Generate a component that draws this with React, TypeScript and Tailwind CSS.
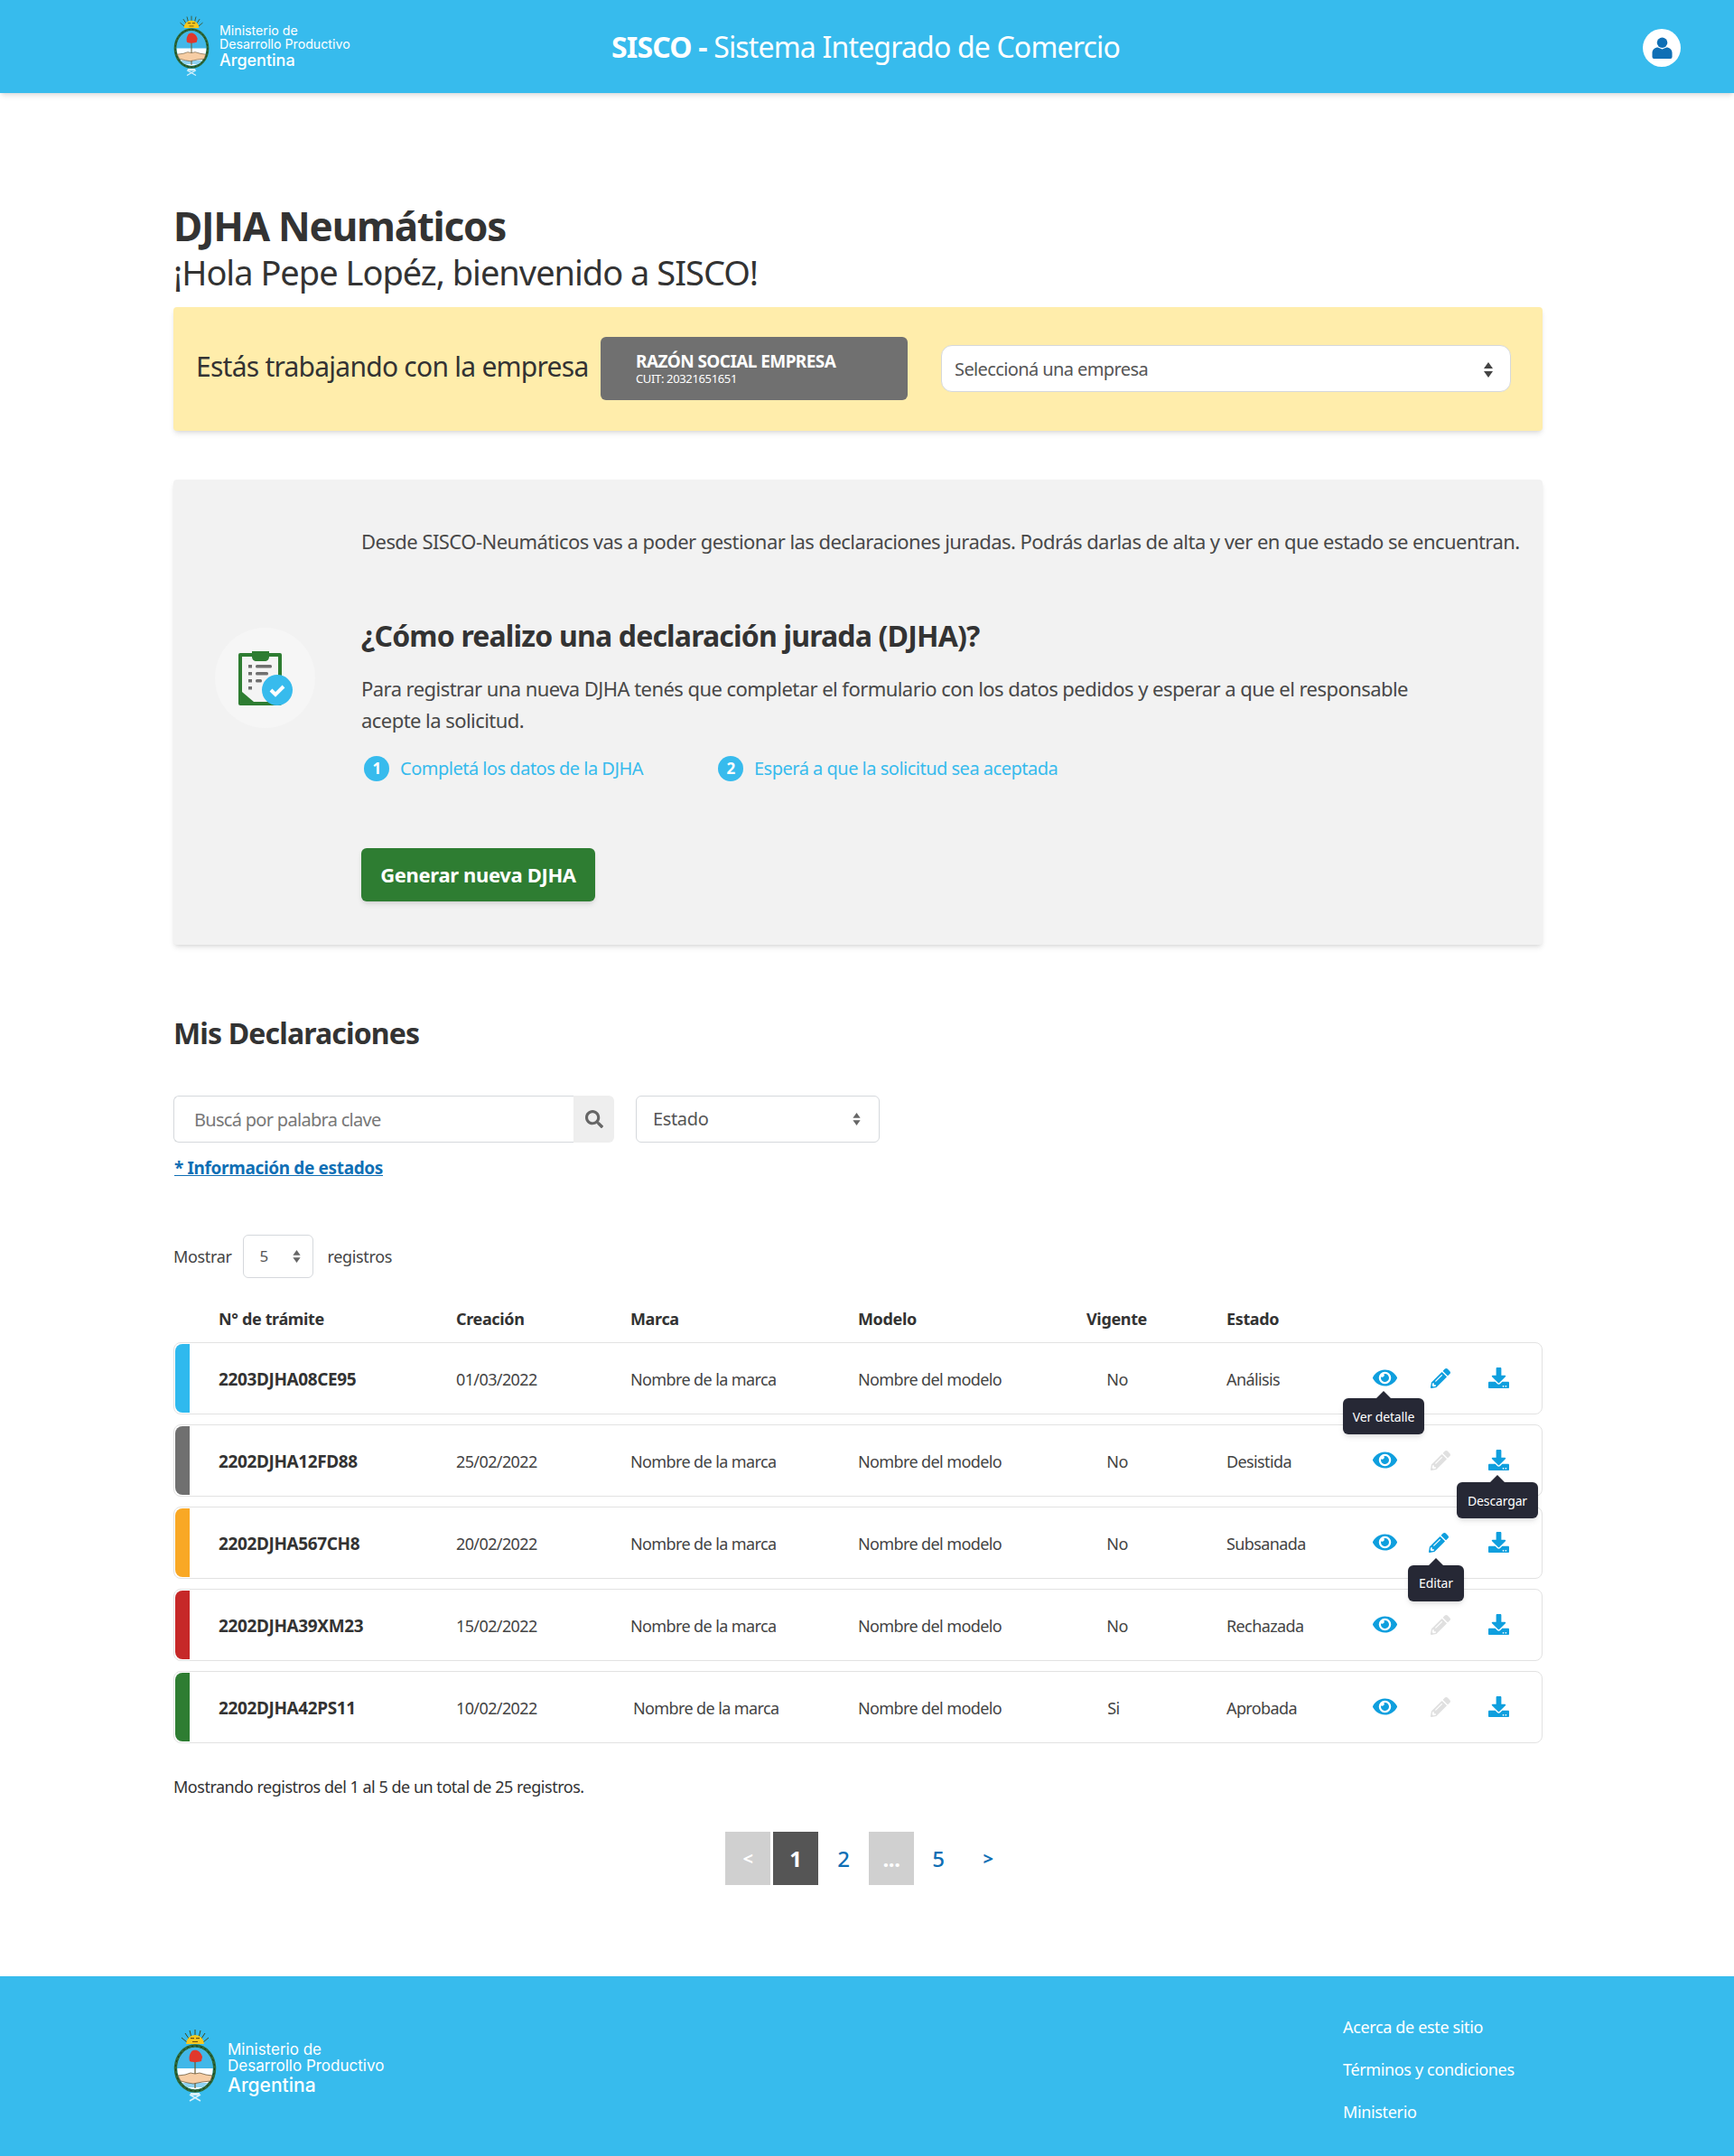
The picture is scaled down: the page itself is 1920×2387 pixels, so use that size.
import { FaEye, FaPencilAlt, FaDownload, FaSearch } from "react-icons/fa";

const rows = [
  { id: "2203DJHA08CE95", date: "01/03/2022", vig: "No", estado: "Análisis", color: "bg-[#2fb9ee]", edit: true },
  { id: "2202DJHA12FD88", date: "25/02/2022", vig: "No", estado: "Desistida", color: "bg-[#707070]", edit: false },
  { id: "2202DJHA567CH8", date: "20/02/2022", vig: "No", estado: "Subsanada", color: "bg-[#f9a825]", edit: true },
  { id: "2202DJHA39XM23", date: "15/02/2022", vig: "No", estado: "Rechazada", color: "bg-[#c62828]", edit: false },
  { id: "2202DJHA42PS11", date: "10/02/2022", vig: "Si", estado: "Aprobada", color: "bg-[#2e7d32]", edit: false },
];

function Emblem({ className }: { className: string }) {
  return (
    <svg viewBox="6 3 48 84" className={className}>
      {/* sun */}
      <g stroke="#3f4a1e" strokeWidth="1">
        <line x1="30" y1="5" x2="30" y2="14" />
        <line x1="24" y1="6" x2="26" y2="14" />
        <line x1="36" y1="6" x2="34" y2="14" />
        <line x1="19" y1="9" x2="23" y2="15" />
        <line x1="41" y1="9" x2="37" y2="15" />
        <line x1="15" y1="14" x2="21" y2="19" />
        <line x1="45" y1="14" x2="39" y2="19" />
      </g>
      <path d="M20 21a10 10 0 0 1 20 0z" fill="#f7c81e" />
      <rect x="25" y="14" width="4" height="1.200" fill="#6b4f10" />
      <rect x="31" y="14" width="4" height="1.200" fill="#6b4f10" />
      <rect x="27" y="18" width="6" height="1" fill="#6b4f10" />
      {/* oval */}
      <ellipse cx="30" cy="48" rx="21.500" ry="25" fill="none" stroke="#2d6a3a" strokeWidth="3.500" />
      <ellipse cx="30" cy="48" rx="21.500" ry="25" fill="none" stroke="#16331c" strokeWidth="1" strokeDasharray="2 3" />
      <clipPath id="emblema">
        <ellipse cx="30" cy="48" rx="19.700" ry="23.200" />
      </clipPath>
      <g clipPath="url(#emblema)">
        <rect x="8" y="22" width="44" height="26" fill="#42b7e8" />
        <rect x="8" y="48" width="44" height="26" fill="#ffffff" />
        <rect x="8" y="64" width="44" height="5" fill="#8fd3f2" />
      </g>
      <line x1="30" y1="40" x2="30" y2="70" stroke="#6a5a2a" strokeWidth="1.200" />
      <path d="M24 40c-1-5 0-7 1-9 1-3 4-4 7-3 3 1 5 4 6 7 0 2-1 3-1 5-4 1-9 2-13 0z" fill="#e0382c" />
      <path d="M11 56l8-1 6-2 5 1 5-1 7 2 7 1-2 6-9 1-5 1-5 1-6-1-8-2z" fill="#f6cda4" stroke="#5b4a2c" strokeWidth="0.700" />
      {/* ribbon */}
      <path d="M24 77l12 7M36 77l-12 7" stroke="#d7f0fb" strokeWidth="1.500" />
      <path d="M25 75h10v3H25z" fill="#d7f0fb" />
    </svg>
  );
}

function LogoText({ big }: { big?: boolean }) {
  return (
    <div className={big ? "font-['Inter',sans-serif] tracking-normal text-white leading-[18px] text-[17px] mt-[8px]" : "font-['Inter',sans-serif] tracking-normal text-white leading-[15px] text-[14.200px] ml-[1px]"}>
      <div>Ministerio de</div>
      <div>Desarrollo Productivo</div>
      <div className={big ? "text-[21px] font-medium leading-[26px]" : "text-[18px] font-medium leading-[21px]"}>Argentina</div>
    </div>
  );
}

function Tooltip({ label, className }: { label: string; className: string }) {
  return (
    <div className={`absolute z-10 h-10 flex items-center justify-center rounded-md bg-[#262835] text-white text-[14px] tracking-[-0.01em] shadow-md ${className}`}>
      <span className="absolute -top-2 left-1/2 -ml-2 w-0 h-0 border-x-8 border-x-transparent border-b-8 border-b-[#262835]" />
      {label}
    </div>
  );
}

function SelectBox({ label, className, small }: { label: string; className: string; small?: boolean }) {
  return (
    <div className={`flex items-center justify-between bg-white border border-[#d5d8dc] text-[#555] ${className}`}>
      <span>{label}</span>
      <svg viewBox="0 0 10 17" className={small ? "w-[9px] h-[14px] fill-[#666]" : "w-[10px] h-[17px] fill-[#444]"}>
        <path d="M5 0l5 7H0zM0 10h10l-5 7z" />
      </svg>
    </div>
  );
}

export default function App() {
  return (
    <div className="w-[1920px] h-[2387px] flex flex-col bg-white font-['Noto_Sans','Open_Sans',sans-serif] tracking-[-0.022em] text-[#333]">
      <header className="h-[103px] shrink-0 bg-[#37bbed] shadow-md flex items-center pl-[192px] pr-[59px] relative">
        <div className="flex items-center gap-[10px] w-[485px]">
          <Emblem className="w-10 h-[70px] -mt-[1px]" />
          <LogoText />
        </div>
        <div className="text-white text-[32px] tracking-[-0.026em] leading-none">
          <span className="font-bold">SISCO -</span> Sistema Integrado de Comercio
        </div>
        <div className="ml-auto mt-[3px] w-[42px] h-[42px] rounded-full bg-white flex items-center justify-center">
          <svg viewBox="0 0 24 25" className="w-[23px] h-[24px] fill-[#0f6fb5]">
            <circle cx="12" cy="6.500" r="6" />
            <path d="M0.500 23v-4.500c0-4 3-6.500 6.500-6.500l5 2 5-2c3.500 0 6.500 2.500 6.500 6.500V23a2 2 0 0 1-2 2h-19a2 2 0 0 1-2-2z" />
          </svg>
        </div>
      </header>

      <main className="pl-[192px] pr-[212px] flex-1">
        <h1 className="mt-[118px] text-[44px] tracking-[-0.0283em] font-bold leading-[58px] text-[#333]">DJHA Neumáticos</h1>
        <p className="text-[38px] tracking-[-0.0263em] leading-[46px] text-[#333] -mt-[1px]">¡Hola Pepe Lopéz, bienvenido a SISCO!</p>

        <section className="mt-[16px] h-[137px] bg-[#ffedab] shadow-md rounded-sm flex items-center pl-[25px]">
          <div className="text-[30px] tracking-[-0.025em] w-[448px] -mt-[6px] whitespace-nowrap">Estás trabajando con la empresa</div>
          <div className="w-[340px] h-[70px] -mt-[1px] rounded-md bg-[#707070] text-white pl-[39px] flex flex-col justify-center">
            <div className="text-[19px] tracking-[-0.03em] font-bold leading-[22px]">RAZÓN SOCIAL EMPRESA</div>
            <div className="text-[13px] leading-4">CUIT: 20321651651</div>
          </div>
          <SelectBox label="Seleccioná una empresa" className="ml-[37px] w-[631px] h-[52px] -mt-[1px] pt-[2px] pl-[14px] pr-[19px] text-[20px] tracking-[-0.03em] rounded-xl" />
        </section>

        <section className="mt-[54px] h-[515px] bg-[#f2f2f2] shadow-md rounded-sm flex">
          <div className="w-[208px] shrink-0 flex items-center justify-end pr-[51px]">
            <div className="w-[111px] h-[111px] rounded-full bg-[#f6f6f6] flex items-center justify-center -mt-[76px]">
              <svg viewBox="0 0 60 60" className="w-[60px] h-[60px]">
                <rect x="0" y="2" width="48" height="58" rx="2" fill="#2e7d32" />
                <path d="M4 6h40v50H17L4 45z" fill="#f4f4f4" />
                <path d="M15 0h19v6c0 3-2 5-5 5h-9c-3 0-5-2-5-5z" fill="#2e7d32" />
                <g fill="#707070">
                  <rect x="11" y="15" width="4" height="3.500" />
                  <rect x="19" y="15" width="18" height="3.500" rx="1.500" />
                  <rect x="11" y="23" width="4" height="3.500" />
                  <rect x="19" y="23" width="14" height="3.500" rx="1.500" />
                  <rect x="11" y="31" width="4" height="3.500" />
                  <rect x="19" y="31" width="7" height="3.500" rx="1.500" />
                  <rect x="11" y="39" width="4" height="3.500" />
                </g>
                <circle cx="43" cy="43" r="17" fill="#37bbed" />
                <path d="M36 43l5 5 9-9" fill="none" stroke="#fff" strokeWidth="4" />
              </svg>
            </div>
          </div>
          <div className="flex-1 text-[#484848]">
            <p className="mt-[54px] text-[22px] tracking-[-0.0248em] leading-7 whitespace-nowrap">Desde SISCO-Neumáticos vas a poder gestionar las declaraciones juradas. Podrás darlas de alta y ver en que estado se encuentran.</p>
            <h2 className="mt-[70px] text-[32px] tracking-[-0.0257em] font-bold leading-[42px] text-[#333]">¿Cómo realizo una declaración jurada (DJHA)?</h2>
            <p className="mt-[20px] text-[22px] tracking-[-0.025em] leading-[35px] w-[1210px]">Para registrar una nueva DJHA tenés que completar el formulario con los datos pedidos y esperar a que el responsable acepte la solicitud.</p>
            <div className="mt-[22px] flex items-center text-[20px] tracking-[-0.025em] text-[#37bbed] leading-7">
              <span className="ml-[3px] w-7 h-7 rounded-full bg-[#37bbed] text-white text-[17px] font-bold flex items-center justify-center">1</span>
              <span className="ml-3 w-[352px]">Completá los datos de la DJHA</span>
              <span className="w-7 h-7 rounded-full bg-[#37bbed] text-white text-[17px] font-bold flex items-center justify-center">2</span>
              <span className="ml-3">Esperá a que la solicitud sea aceptada</span>
            </div>
            <button className="mt-[74px] w-[259px] h-[59px] rounded-md bg-[#2e7d32] text-white text-[22px] font-bold shadow-md">Generar nueva DJHA</button>
          </div>
        </section>

        <h2 className="mt-[77px] text-[32px] tracking-[-0.0266em] font-bold leading-[42px]">Mis Declaraciones</h2>

        <div className="mt-[48px] flex">
          <div className="w-[443px] h-[52px] border border-[#d5d8dc] border-r-0 rounded-l-md flex items-center pl-[22px] pt-[2px] text-[20px] tracking-[-0.035em] text-[#777]">Buscá por palabra clave</div>
          <div className="w-[45px] h-[52px] bg-[#eeeeee] rounded-r-md flex items-center justify-center">
            <FaSearch className="text-[#666] text-[20px]" />
          </div>
          <SelectBox label="Estado" className="ml-6 w-[270px] h-[52px] pl-[18px] pr-[20px] text-[20px] rounded-md" small />
        </div>
        <a className="block mt-[14px] ml-[1px] text-[19px] font-bold text-[#0f6fb5] underline leading-7">* Información de estados</a>

        <div className="mt-[60px] flex items-center text-[18px] text-[#444]">
          <span>Mostrar</span>
          <SelectBox label="5" className="ml-[13px] w-[78px] h-12 pl-[17px] pr-[13px] text-[17px] rounded-md" small />
          <span className="ml-[15px]">registros</span>
        </div>

        <div className="mt-[31px] grid grid-cols-[263px_193px_252px_253px_155px_1fr] text-[18px] font-bold pl-[50px] leading-7 text-[#333]">
          <div>N° de trámite</div>
          <div>Creación</div>
          <div>Marca</div>
          <div>Modelo</div>
          <div>Vigente</div>
          <div>Estado</div>
        </div>

        <div className="mt-[12px] flex flex-col gap-[11px]">
          {rows.map((r, i) => (
            <div key={r.id} className="relative h-[80px] border border-[#e2e2e2] rounded-lg flex items-center text-[18px] tracking-[-0.034em] text-[#444]">
              <div className={`absolute left-[1px] top-[1px] bottom-[1px] w-[16px] rounded-l-lg ${r.color}`} />
              <div className="pl-[49px] pt-[2px] w-[312px] font-bold text-[19px] tracking-[-0.02em] text-[#333]">{r.id}</div>
              <div className="w-[193px] pt-[2px]">{r.date}</div>
              <div className={i === 4 ? "w-[252px] pl-[3px] pt-[2px]" : "w-[252px] pt-[2px]"}>Nombre de la marca</div>
              <div className="w-[253px] pt-[2px]">Nombre del modelo</div>
              <div className="w-[155px] pt-[2px]">
                <div className={i === 4 ? "w-[60px] text-center" : "w-[68px] text-center"}>{r.vig}</div>
              </div>
              <div className="w-[145px] pt-[2px]">{r.estado}</div>
              <div className="relative w-[60px] flex justify-center -mt-[1px]">
                <FaEye className="text-[#0f9fde] text-[27px]" />
                {i === 0 && <Tooltip label="Ver detalle" className="left-[-16px] top-[36px] w-[90px]" />}
              </div>
              <div className={i === 2 ? "relative w-[62px] flex justify-center pr-[2px] -mt-[1px]" : "relative w-[62px] flex justify-center pl-[2px] -mt-[1px]"}>
                <FaPencilAlt className={r.edit ? "text-[#0f9fde] text-[22px]" : "text-[#e0e0e0] text-[22px]"} />
                {i === 2 && <Tooltip label="Editar" className="left-[-4px] top-[36px] w-[62px]" />}
              </div>
              <div className="relative w-[68px] flex justify-center -mt-[1px]">
                <FaDownload className="text-[#0f9fde] text-[23px]" />
                {i === 1 && <Tooltip label="Descargar" className="left-[-12px] top-[36px] w-[90px]" />}
              </div>
            </div>
          ))}
        </div>

        <p className="mt-[34px] text-[18px] tracking-[-0.027em] leading-7 text-[#333]">Mostrando registros del 1 al 5 de un total de 25 registros.</p>

        <nav className="mt-[36px] ml-[611px] flex h-[59px] items-center text-[24px] font-bold">
          <div className="w-[50px] h-[59px] bg-[#d0d0d0] text-white flex items-center justify-center text-[20px]">&lt;</div>
          <div className="ml-[3px] w-[50px] h-[59px] bg-[#555555] text-white flex items-center justify-center">1</div>
          <div className="w-[56px] text-center font-medium text-[#0f6fb5]">2</div>
          <div className="w-[50px] h-[59px] bg-[#d0d0d0] text-white flex items-center justify-center">...</div>
          <div className="w-[54px] text-center font-medium text-[#0f6fb5]">5</div>
          <div className="w-[56px] text-center text-[#0f6fb5] text-[20px]">&gt;</div>
        </nav>
      </main>

      <footer className="h-[199px] shrink-0 bg-[#37bbed] pl-[192px] pr-[212px] flex items-center justify-between">
        <div className="flex items-center gap-[12px] -mt-[2px]">
          <Emblem className="w-12 h-[84px]" />
          <LogoText big />
        </div>
        <ul className="w-[221px] text-white text-[18px] flex flex-col gap-[19px] leading-7 mt-[7px]">
          <li>Acerca de este sitio</li>
          <li>Términos y condiciones</li>
          <li>Ministerio</li>
        </ul>
      </footer>
    </div>
  );
}
